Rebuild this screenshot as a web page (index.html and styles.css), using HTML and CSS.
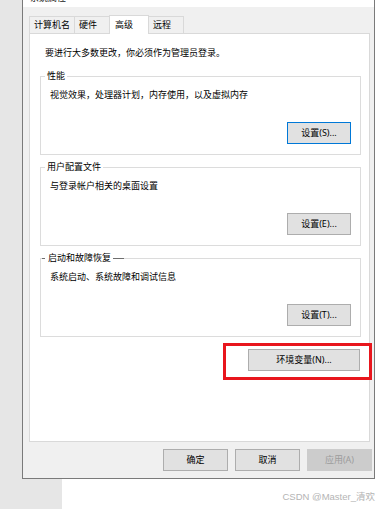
FILE: index.html
```html
<!DOCTYPE html>
<html lang="zh-CN">
<head>
<meta charset="utf-8">
<title>系统属性</title>
<link rel="stylesheet" href="styles.css">
</head>
<body>
<div class="dialog">
  <div class="titlebar"><span class="title">系统属性</span></div>
  <div class="tabs">
    <div class="tab tab-first">计算机名</div>
    <div class="tab">硬件</div>
    <div class="tab tab-active">高级</div>
    <div class="tab">远程</div>
  </div>
  <div class="panel">
    <p class="intro">要进行大多数更改，你必须作为管理员登录。</p>
    <div class="group">
      <span class="legend">性能</span>
      <p class="desc">视觉效果，处理器计划，内存使用，以及虚拟内存</p>
      <div class="group-actions"><button class="btn btn-default">设置(S)...</button></div>
    </div>
    <div class="group">
      <span class="legend">用户配置文件</span>
      <p class="desc">与登录帐户相关的桌面设置</p>
      <div class="group-actions"><button class="btn">设置(E)...</button></div>
    </div>
    <div class="group">
      <span class="legend legend-dashed">启动和故障恢复</span>
      <p class="desc">系统启动、系统故障和调试信息</p>
      <div class="group-actions"><button class="btn">设置(T)...</button></div>
    </div>
    <div class="env-row">
      <span class="highlight"><button class="btn btn-env">环境变量(N)...</button></span>
    </div>
  </div>
  <div class="footer">
    <button class="btn btn-footer">确定</button>
    <button class="btn btn-footer">取消</button>
    <button class="btn btn-footer" disabled>应用(A)</button>
  </div>
</div>
<div class="watermark">CSDN @Master_清欢</div>
</body>
</html>
```

FILE: styles.css
```css
* { box-sizing: border-box; }
html, body { margin: 0; padding: 0; }
body {
  width: 379px;
  height: 509px;
  overflow: hidden;
  background: linear-gradient(to right, #e6e6e6 0, #e6e6e6 62px, #ffffff 62px);
  font-family: "Noto Sans", "Noto Sans CJK SC", sans-serif;
  font-size: 9px;
  line-height: 12px;
  color: #000;
}
.dialog {
  margin-left: 22px;
  width: 353px;
  height: 479px;
  background: #f0f0f0;
  border: 1px solid #7a7a7a;
  border-top: 0;
  display: flex;
  flex-direction: column;
}
.titlebar {
  flex: none;
  height: 7px;
  background: #fff;
  overflow: hidden;
  padding-left: 7px;
}
.title { display: block; margin-top: -8px; color: #222; }
.tabs {
  flex: none;
  display: flex;
  align-items: flex-end;
  height: 19px;
  margin: 8px 0 -1px 6px;
  position: relative;
  z-index: 1;
}
.tab {
  height: 18px;
  min-width: 36px;
  padding: 0 4px;
  border: 1px solid #d9d9d9;
  background: #f0f0f0;
  margin-left: -1px;
  line-height: 16px;
  white-space: nowrap;
}
.tab-first { margin-left: 0; }
.tab-active {
  height: 19px;
  min-width: 40px;
  padding: 1px 4px 0 5px;
  background: #fff;
  border-bottom: 0;
}
.panel {
  flex: none;
  height: 409px;
  margin: 0 4px 0 6px;
  background: #fff;
  border: 1px solid #d9d9d9;
  padding: 13px 8px 0 10px;
}
.intro { margin: 0 0 17px 5px; }
.group {
  position: relative;
  border: 1px solid #dcdcdc;
  padding: 12px 9px 10px 9px;
  margin-bottom: 12px;
}
.desc { margin: 0; }
.legend {
  position: absolute;
  top: -7px;
  left: 4px;
  padding: 0 2px;
  background: #fff;
  white-space: nowrap;
}
.legend-dashed {
  left: 1px;
  padding: 0;
  display: flex;
}
.legend-dashed::before,
.legend-dashed::after {
  content: "";
  height: 1px;
  margin-top: 6px;
  background: #6e6e6e;
}
.legend-dashed::before { width: 3px; margin-right: 3px; }
.legend-dashed::after { width: 11px; margin-left: 2px; }
.group-actions {
  display: flex;
  justify-content: flex-end;
  margin-top: 21px;
}
.btn {
  height: 22px;
  width: 64px;
  background: #e1e1e1;
  border: 1px solid #adadad;
  font: inherit;
  color: #000;
  padding: 0;
  white-space: nowrap;
}
.btn-default { border-color: #0078d7; }
.env-row {
  display: flex;
  justify-content: flex-end;
  padding-right: 1px;
}
.highlight {
  position: relative;
  display: flex;
}
.highlight::after {
  content: "";
  position: absolute;
  left: -25px;
  top: -6px;
  right: -12px;
  bottom: -9px;
  border: 3px solid #e8161d;
  pointer-events: none;
}
.btn-env { width: 112px; }
.footer {
  flex: none;
  display: flex;
  justify-content: flex-end;
  gap: 7px;
  margin-top: 7px;
  padding-right: 2px;
}
.btn-footer { width: 65px; }
.btn:disabled {
  background: #cccccc;
  border-color: #cccccc;
  color: #9c9c9c;
}
.watermark {
  text-align: right;
  padding-right: 4px;
  margin-top: 12px;
  font-family: "Liberation Sans", "Noto Sans CJK SC", sans-serif;
  font-size: 9.5px;
  line-height: 12px;
  color: #b4b4b4;
}
```
